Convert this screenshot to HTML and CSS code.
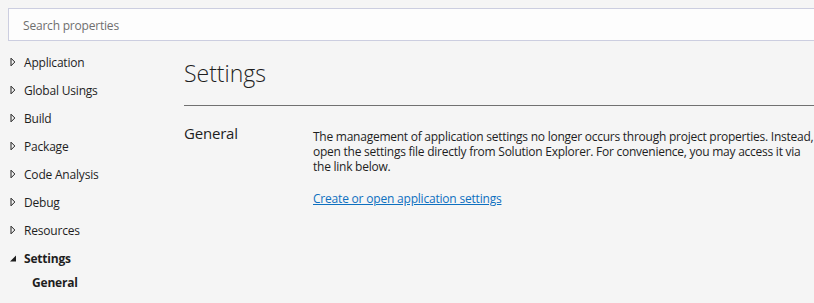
FILE: index.html
```html
<!DOCTYPE html>
<html lang="en">
<head>
  <meta charset="UTF-8" />
  <title>Project Properties - Settings</title>
  <link rel="stylesheet" href="styles.css">
</head>
<body>
  <div class="search">
    <input class="search-input" type="text" placeholder="Search properties">
  </div>

  <div class="page">
    <ul class="nav">
      <li class="nav-item"><svg class="arrow" viewBox="0 0 6 10"><path d="M1 1.2 L4.8 5 L1 8.8 Z" /></svg>Application</li>
      <li class="nav-item"><svg class="arrow" viewBox="0 0 6 10"><path d="M1 1.2 L4.8 5 L1 8.8 Z" /></svg>Global Usings</li>
      <li class="nav-item"><svg class="arrow" viewBox="0 0 6 10"><path d="M1 1.2 L4.8 5 L1 8.8 Z" /></svg>Build</li>
      <li class="nav-item"><svg class="arrow" viewBox="0 0 6 10"><path d="M1 1.2 L4.8 5 L1 8.8 Z" /></svg>Package</li>
      <li class="nav-item"><svg class="arrow" viewBox="0 0 6 10"><path d="M1 1.2 L4.8 5 L1 8.8 Z" /></svg>Code Analysis</li>
      <li class="nav-item"><svg class="arrow" viewBox="0 0 6 10"><path d="M1 1.2 L4.8 5 L1 8.8 Z" /></svg>Debug</li>
      <li class="nav-item"><svg class="arrow" viewBox="0 0 6 10"><path d="M1 1.2 L4.8 5 L1 8.8 Z" /></svg>Resources</li>
      <li class="nav-item active"><svg class="arrow open" viewBox="0 0 6 10"><path d="M0 8.5 L6 8.5 L6 2.5 Z" /></svg>Settings</li>
      <li class="nav-sub">General</li>
    </ul>

    <div class="content">
      <h1 class="title">Settings</h1>
      <div class="section">
        <h2 class="section-name">General</h2>
        <div class="section-body">
          <p class="desc">The management of application settings no longer occurs through project properties. Instead, open the settings file directly from Solution Explorer. For convenience, you may access it via the link below.</p>
          <a class="link" href="#">Create or open application settings</a>
        </div>
      </div>
    </div>
  </div>
</body>
</html>
```

FILE: styles.css
```css
:root {
  --bg: #f5f5f5;
  --text: #1e1e1e;
  --border: #ccceE0;
  --rule: #717171;
  --link: #0e70c0;
  --font: 'Open Sans', 'Segoe UI', sans-serif;
}

html, body {
  margin: 0;
  padding: 0;
  background: var(--bg);
  color: var(--text);
  font-family: var(--font);
  font-size: 12px;
  letter-spacing: -0.2px;
}

.search {
  padding: 8px 0 0 8px;
}

.search-input {
  display: block;
  box-sizing: border-box;
  width: 100%;
  height: 33px;
  margin: 0;
  padding: 1px 0 0 14px;
  border: 1px solid var(--border);
  border-right: none;
  background: #fdfdfd;
  font-family: var(--font);
  font-size: 12px;
  letter-spacing: -0.2px;
  color: var(--text);
  outline: none;
}

.search-input::placeholder {
  color: #6f6f6f;
}

.page {
  display: flex;
}

.nav {
  list-style: none;
  margin: 7px 0 0;
  padding: 0;
  width: 184px;
  flex-shrink: 0;
}

.nav-item {
  display: flex;
  align-items: center;
  height: 28px;
  padding-left: 10px;
}

.nav-item.active {
  font-weight: 700;
}

.nav-sub {
  height: 22px;
  line-height: 22px;
  padding-left: 32px;
  font-weight: 700;
}

.arrow {
  width: 6px;
  height: 10px;
  margin-right: 8px;
  flex-shrink: 0;
  fill: none;
  stroke: var(--text);
  stroke-width: 1;
}

.arrow.open {
  fill: var(--text);
  stroke: none;
}

.content {
  flex: 1;
  min-width: 0;
}

.title {
  margin: 15px 0 0;
  padding-bottom: 15px;
  border-bottom: 1px solid var(--rule);
  font-size: 23px;
  font-weight: 300;
  line-height: 34px;
  letter-spacing: 0;
}

.section {
  display: flex;
  padding-top: 16px;
}

.section-name {
  width: 129px;
  flex-shrink: 0;
  margin: 0;
  font-size: 15px;
  font-weight: 400;
  line-height: 22px;
}

.section-body {
  padding-top: 7px;
}

.desc {
  margin: 0 0 16px;
  max-width: 501px;
  line-height: 15px;
  letter-spacing: -0.25px;
}

.link {
  color: var(--link);
  text-decoration: underline;
}
```
